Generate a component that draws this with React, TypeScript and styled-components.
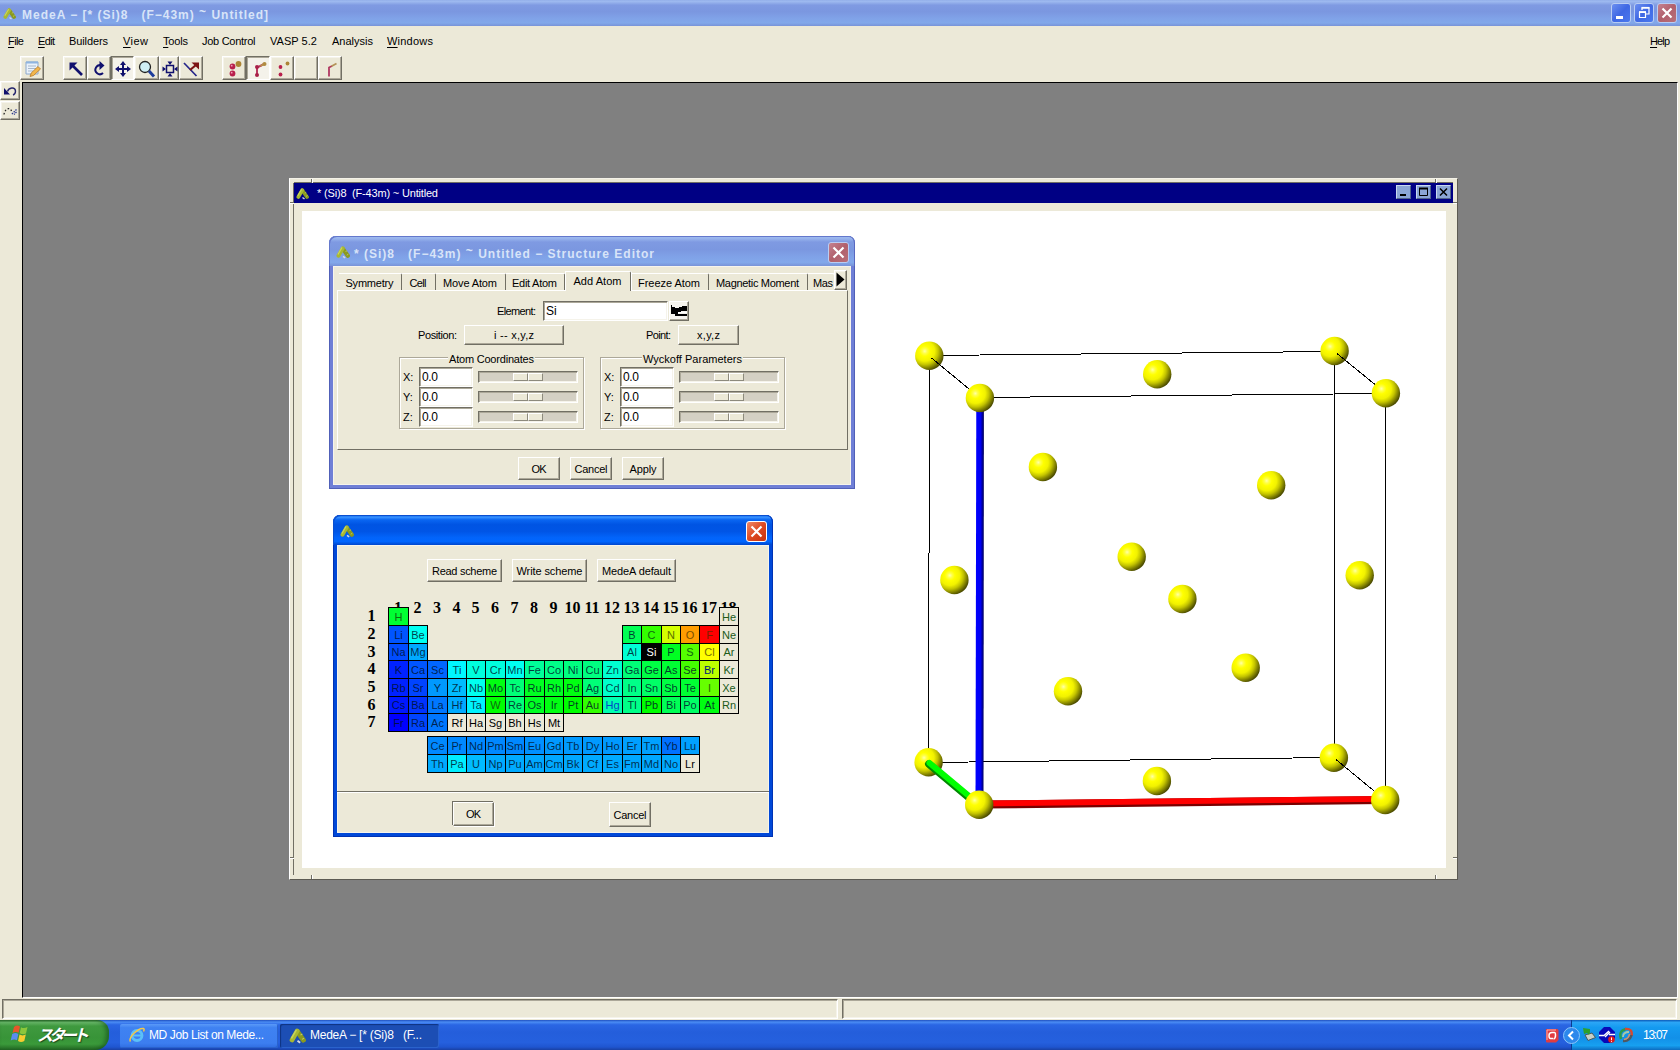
import React, { useLayoutEffect, useRef } from "react";
import styled, { createGlobalStyle, css } from "styled-components";

const FACE = "#ece9d8";

const Global = createGlobalStyle`
  *, *::before, *::after { box-sizing: border-box; }
  html, body { margin: 0; padding: 0; }
  body {
    font-family: "Liberation Sans", Arial, sans-serif;
    font-size: 11px;
    line-height: 14px;
    color: #000;
    overflow: hidden;
  }
`;

const raised = css`
  border: 1px solid;
  border-color: #fff #716f64 #716f64 #fff;
  box-shadow: inset -1px -1px 0 #aca899, inset 1px 1px 0 #f5f3ea;
`;
const sunken = css`
  border: 1px solid;
  border-color: #716f64 #fff #fff #716f64;
  box-shadow: inset 1px 1px 0 #aca899, inset -1px -1px 0 #f5f3ea;
`;

/* ---------- text fitted to the bitmap-font advance ---------- */
const FitSpan = styled.span`
  display: inline-block;
  white-space: pre;
  flex: none;
`;
function Fit({ w, children }: { w: number; children: React.ReactNode }) {
  const ref = useRef<HTMLSpanElement>(null);
  useLayoutEffect(() => {
    const el = ref.current!;
    el.style.letterSpacing = "0px";
    const natural = el.getBoundingClientRect().width;
    const n = (el.textContent || "").length;
    const ls = (w - natural) / Math.max(1, n - 1);
    el.style.letterSpacing = ls + "px";
    el.style.marginRight = -ls + "px";
  }, [w]);
  return <FitSpan ref={ref}>{children}</FitSpan>;
}

/* ---------- shell ---------- */
const Screen = styled.div`
  width: 1680px;
  height: 1050px;
  display: flex;
  flex-direction: column;
  background: ${FACE};
  overflow: hidden;
`;
const inactiveTitle = "linear-gradient(#94b0ea 0, #9db9ef 6%, #7f9ae2 20%, #7b97e0 45%, #80a2e8 70%, #82a8ea 88%, #7893d8 100%)";
const activeTitle = "linear-gradient(#0058e6 0, #3a93ff 7%, #0a66f2 16%, #0054e3 32%, #0055e6 55%, #0264fa 75%, #0066ff 88%, #0046cc 100%)";

const MainTitle = styled.header`
  height: 26px;
  flex: none;
  display: flex;
  align-items: center;
  padding: 0 3px 0 3px;
  gap: 6px;
  background: ${inactiveTitle};
`;
const TitleText = styled.div`
  flex: 1;
  font-weight: bold;
  font-size: 12px;
  color: #d8e4f8;
`;
const Tilde = styled.span`
  vertical-align: 3px;
`;
const CaptionButtons = styled.div`
  display: flex;
  gap: 3px;
`;
const Caption = styled.span<{ $tone: "blue" | "rose" | "red"; $size?: number }>`
  width: ${(p) => p.$size || 20}px;
  height: ${(p) => p.$size || 20}px;
  border: 1px solid ${(p) => (p.$tone === "red" ? "#fff" : "#b9cdf3")};
  border-radius: 3px;
  display: flex;
  background: ${(p) =>
    p.$tone === "blue"
      ? "linear-gradient(135deg,#6c8ff0,#3f68e4 50%,#4a78ee)"
      : p.$tone === "rose"
        ? "linear-gradient(135deg,#c58290,#b1606c 50%,#b8707a)"
        : "linear-gradient(135deg,#f08a68,#dd4a22 50%,#c8320e)"};
  svg { display: block; width: 100%; height: 100%; }
`;

const MenuBar = styled.nav`
  height: 30px;
  flex: none;
  display: flex;
  align-items: center;
  padding: 0 10px 0 8px;
`;
const MenuItem = styled.span<{ $slot: number }>`
  width: ${(p) => p.$slot}px;
  height: 14px;
  u { text-underline-offset: 2px; }
`;
const Grow = styled.div`
  flex: 1;
`;
const ToolBar = styled.div`
  height: 25px;
  flex: none;
  display: flex;
  align-items: flex-start;
  padding-left: 20px;
`;
const Tool = styled.span<{ $w?: number; $down?: boolean; $gap?: number }>`
  width: ${(p) => p.$w || 24}px;
  height: 24px;
  margin-left: ${(p) => p.$gap || 0}px;
  ${(p) => (p.$down ? sunken : raised)}
  ${(p) => p.$down && "background:#f4f2ea;"}
  display: flex;
  align-items: center;
  justify-content: center;
  padding: 1px 0 0 1px;
  svg { display: block; flex: none; overflow: visible; }
`;
const Workspace = styled.div`
  flex: 1;
  min-height: 0;
  display: flex;
`;
const SideBar = styled.aside`
  width: 22px;
  flex: none;
`;
const SideTool = styled.span`
  width: 20px;
  height: 19px;
  margin-bottom: 1px;
  ${raised}
  display: flex;
  align-items: center;
  justify-content: center;
`;
const Mdi = styled.main`
  width: 1656px;
  height: 916px;
  margin-top: 1px;
  position: relative;
  background: #808080;
  border-top: 1px solid #000;
  border-left: 1px solid #000;
  border-bottom: 1px solid #fff;
  border-right: 1px solid #fff;
`;
const StatusBar = styled.div`
  height: 21px;
  flex: none;
  display: flex;
  gap: 4px;
  padding: 0 2px 1px 2px;
`;
const StatusCell = styled.div<{ $w: number }>`
  width: ${(p) => p.$w}px;
  ${sunken}
`;

/* ---------- child window ---------- */
const ChildWindow = styled.section`
  position: absolute;
  left: 266px;
  top: 95px;
  width: 1169px;
  height: 702px;
  background: ${FACE};
  border: 1px solid;
  border-color: #f4f2e8 #5c5a52 #5c5a52 #fff;
  padding: 4px;
  display: flex;
  flex-direction: column;
`;
const FrameNotch = styled.i<{ $x: number; $y: number; $v?: boolean }>`
  position: absolute;
  left: ${(p) => p.$x}px;
  top: ${(p) => p.$y}px;
  width: ${(p) => (p.$v ? 2 : 4)}px;
  height: ${(p) => (p.$v ? 4 : 2)}px;
  background: linear-gradient(${(p) => (p.$v ? "to right" : "to bottom")}, #716f64 50%, #fff 50%);
`;
const ChildTitle = styled.div`
  height: 20px;
  flex: none;
  background: #000084;
  color: #fff;
  display: flex;
  align-items: center;
  gap: 8px;
  padding: 0 2px 0 2px;
  box-shadow: 0 -1px 0 #716f64, -1px 0 0 #716f64;
`;
const ChildButtons = styled.div`
  display: flex;
  gap: 5px;
  height: 14px;
  margin-top: -3px;
`;
const ChildButton = styled.span`
  width: 15px;
  height: 14px;
  background: #8ba6d6;
  border: 1px solid;
  border-color: #c8d8f0 #50648c #50648c #c8d8f0;
  svg { display: block; }
`;
const ChildBody = styled.div`
  flex: 1;
  padding: 8px 6px 7px 8px;
  box-shadow: -1px 0 0 #716f64;
`;
const Viewer = styled.div`
  width: 1144px;
  height: 657px;
  background: #fff;
  overflow: hidden;
  svg { display: block; }
`;

/* ---------- dialogs ---------- */
const Dialog = styled.section<{ $x: number; $y: number; $w: number; $h: number; $active?: boolean }>`
  position: absolute;
  left: ${(p) => p.$x}px;
  top: ${(p) => p.$y}px;
  width: ${(p) => p.$w}px;
  height: ${(p) => p.$h}px;
  border-radius: 7px 7px 0 0;
  background: ${(p) => (p.$active ? "#0048d8" : "#6f7fd6")};
  box-shadow: inset 0 0 0 1px ${(p) => (p.$active ? "#0032b4" : "#5060b8")};
  padding: 0 4px 4px 4px;
  display: flex;
  flex-direction: column;
`;
const DialogTitle = styled.div<{ $active?: boolean }>`
  height: 30px;
  flex: none;
  margin: 0 -4px;
  border-radius: 7px 7px 0 0;
  padding: 2px 6px 0 7px;
  display: flex;
  align-items: center;
  gap: 4px;
  background: ${(p) => (p.$active ? activeTitle : inactiveTitle)};
  box-shadow: inset 1px 1px 0 ${(p) => (p.$active ? "#0a4fd0" : "#6478cc")}, inset -1px 0 0 ${(p) => (p.$active ? "#0032b4" : "#5868c0")};
`;
const DialogBody = styled.div`
  flex: 1;
  min-height: 0;
  background: ${FACE};
  box-shadow: inset 0 0 0 1px #f6f4ec;
`;

const PushButton = styled.span<{ $w: number; $h?: number; $ml?: number; $default?: boolean }>`
  width: ${(p) => p.$w}px;
  height: ${(p) => p.$h || 23}px;
  margin-left: ${(p) => p.$ml || 0}px;
  flex: none;
  display: inline-flex;
  align-items: center;
  justify-content: center;
  background: ${FACE};
  border: 1px solid;
  border-color: #fff #716f64 #716f64 #fff;
  box-shadow: inset -1px -1px 0 #aca899${(p) => (p.$default ? ", -1px -1px 0 #716f64, 1px 1px 0 #fff" : "")};
`;

/* structure editor */
const TabStrip = styled.div`
  height: 24px;
  padding: 5px 0 0 6px;
  display: flex;
  align-items: flex-end;
`;
const Tab = styled.span<{ $w: number; $on?: boolean; $cut?: boolean }>`
  width: ${(p) => p.$w}px;
  height: ${(p) => (p.$on ? 20 : 17)}px;
  margin-bottom: ${(p) => (p.$on ? -1 : 0)}px;
  position: relative;
  z-index: ${(p) => (p.$on ? 1 : 0)};
  background: ${FACE};
  display: flex;
  align-items: flex-start;
  justify-content: ${(p) => (p.$cut ? "flex-start" : "center")};
  padding-top: 2px;
  padding-left: ${(p) => (p.$cut ? 5 : 0)}px;
  padding-right: ${(p) => (p.$cut ? 0 : 1)}px;
  overflow: hidden;
  border-top: 1px solid #fff;
  border-left: ${(p) => (p.$on ? "1px solid #fff" : "0")};
  border-right: ${(p) => (p.$cut ? "0" : "1px solid #716f64")};
  border-top-right-radius: 2px;
  box-shadow: 1px 0 0 #fff;
`;
const TabArrow = styled.span`
  width: 13px;
  height: 20px;
  ${raised}
  position: relative;
  svg { display: block; }
`;
const TabPanel = styled.div`
  width: 511px;
  height: 160px;
  margin-left: 4px;
  border: 1px solid;
  border-color: #fff #716f64 #716f64 #fff;
`;
const FieldRow = styled.div<{ $mt: number; $pl: number }>`
  display: flex;
  align-items: center;
  margin-top: ${(p) => p.$mt}px;
  padding-left: ${(p) => p.$pl}px;
`;
const TextInput = styled.span<{ $w: number; $h?: number; $ml?: number }>`
  width: ${(p) => p.$w}px;
  height: ${(p) => p.$h || 20}px;
  margin-left: ${(p) => p.$ml || 0}px;
  background: #fff;
  padding: 2px 2px 0;
  font-size: 12px;
  flex: none;
  ${sunken}
`;
const PickButton = styled.span`
  width: 20px;
  height: 20px;
  margin-left: 1px;
  ${raised}
  background: #f6f4ee;
  svg { display: block; }
`;
const Groups = styled.div`
  display: flex;
  gap: 16px;
  padding: 12px 0 0 61px;
`;
const Group = styled.div`
  width: 185px;
  height: 72px;
  border: 1px solid #aca899;
  box-shadow: 1px 1px 0 #fff, inset 1px 1px 0 #fff;
  padding-left: 3px;
`;
const Legend = styled.div`
  height: 10px;
  display: flex;
  justify-content: center;
  margin-top: -1px;
  padding-right: 3px;
`;
const LegendText = styled.span`
  height: 14px;
  margin-top: -5px;
  background: ${FACE};
  padding: 0 1px;
`;
const CoordRow = styled.div`
  height: 20px;
  display: flex;
  align-items: center;
`;
const AxisName = styled.span`
  width: 16px;
`;
const Slider = styled.span`
  width: 100px;
  height: 12px;
  margin-left: 5px;
  background: #d4d0c4;
  ${sunken}
  display: flex;
  justify-content: center;
  padding: 1px 0 0 0;
`;
const Thumb = styled.span`
  width: 30px;
  height: 8px;
  display: flex;
  &::before, &::after {
    content: "";
    flex: 1;
    background: ${FACE};
    border: 1px solid;
    border-color: #fff #8d8a7d #8d8a7d #fff;
  }
`;
const ButtonRow = styled.div<{ $pt: number; $pl: number }>`
  display: flex;
  padding: ${(p) => p.$pt}px 0 0 ${(p) => p.$pl}px;
`;

/* periodic table */
const Cols = "20px 19px 20px 19px 19px 20px 19px 20px 19px 19px 20px 20px 19px 20px 19px 19px 20px 19px";
const TableArea = styled.div`
  display: grid;
  grid-template-columns: 34px ${Cols};
  grid-template-rows: 14px 18px 18px 17px 18px 18px 17px 18px 5px 18px 18px;
  padding: 11px 0 0 17px;
`;
const Num = styled.span<{ $c: number; $r: number; $top?: boolean }>`
  grid-column: ${(p) => p.$c};
  grid-row: ${(p) => p.$r};
  font: bold 16px/18px "Liberation Serif", "Times New Roman", serif;
  display: flex;
  justify-content: center;
  margin-top: ${(p) => (p.$top ? 6 : 0)}px;
  margin-left: ${(p) => (p.$top ? 0 : 1)}px;
  height: 18px;
  white-space: nowrap;
`;
const Cell = styled.span<{ $c: number; $r: number; $bg: string; $fg: string }>`
  grid-column: ${(p) => p.$c};
  grid-row: ${(p) => p.$r};
  position: relative;
  margin: 0 -1px -1px 0;
  border: 1px solid #000;
  background: ${(p) => p.$bg};
  color: ${(p) => p.$fg};
  display: flex;
  align-items: center;
  justify-content: center;
  line-height: 16px;
`;
const Rule = styled.div<{ $mt: number }>`
  height: 2px;
  margin-top: ${(p) => p.$mt}px;
  border-top: 1px solid #716f64;
  border-bottom: 1px solid #fff;
`;

/* ---------- taskbar ---------- */
const TaskBar = styled.footer`
  height: 30px;
  flex: none;
  display: flex;
  background: linear-gradient(#1f50c0 0, #4a8cf4 7%, #2a66e4 16%, #245edb 40%, #2560de 75%, #1f55d0 90%, #1941a5 100%);
`;
const Start = styled.div`
  width: 109px;
  display: flex;
  align-items: center;
  padding: 0 0 2px 10px;
  gap: 8px;
  border-radius: 0 12px 14px 0;
  background: linear-gradient(#2a6e2a 0, #68b868 8%, #3f9a3f 20%, #389438 60%, #3a9a3a 80%, #256c25 100%);
  box-shadow: inset -3px 0 4px rgba(10, 60, 20, 0.5);
  color: #fff;
`;
const StartLabel = styled.span`
  font: italic bold 16px/20px "Noto Sans CJK JP", sans-serif;
  text-shadow: 1px 1px 1px #1c4a1c;
`;
const TaskButton = styled.div<{ $w: number; $ml: number; $on?: boolean }>`
  width: ${(p) => p.$w}px;
  height: 24px;
  margin: 4px 0 0 ${(p) => p.$ml}px;
  border-radius: 2px;
  display: flex;
  align-items: center;
  gap: 4px;
  padding-left: 9px;
  padding-bottom: 2px;
  color: #fff;
  font-size: 12px;
  background: ${(p) => (p.$on ? "#1c4eb4" : "linear-gradient(#5a9af8 0, #3f82f2 15%, #3c7ef0 80%, #2f6ce0 100%)")};
  box-shadow: ${(p) => (p.$on ? "inset 1px 1px 1px #0f3480, inset -1px -1px 0 #2a62cc" : "inset -1px -1px 0 #2a62cc")};
  svg { flex: none; }
`;
const TrayIdle = styled.div`
  padding: 7px 12px 0 0;
`;
const Tray = styled.div`
  width: 108px;
  display: flex;
  align-items: center;
  background: linear-gradient(#0c59b9 0, #2ba6f6 8%, #149af0 25%, #1290e8 60%, #17a0f0 85%, #0d6cc0 100%);
  box-shadow: -1px 0 0 #0a3c90;
  color: #fff;
  font-size: 12px;
  svg { flex: none; display: block; }
`;
const Chevron = styled.span`
  width: 17px;
  height: 17px;
  margin-left: -9px;
`;
const TrayIcons = styled.span`
  display: flex;
  gap: 3px;
  margin: 0 9px 0 2px;
`;

/* ---------- drawings ---------- */
const Logo = ({ size = 13 }: { size?: number }) => (
  <svg width={size} height={size} viewBox="0 0 13 13">
    <path d="M6.800 4 11 10" stroke="#8a9a20" strokeWidth="3.800" strokeLinecap="round" />
    <path d="M8.800 6.200 10.200 5.400M10 9.500 11.500 8.500" stroke="#c2cc60" strokeWidth=".8" />
    <path d="M6.300 3 2.300 10" stroke="#a8b832" strokeWidth="3.600" strokeLinecap="round" />
    <path d="M5.600 2.200 1.800 8.800" stroke="#c8d45c" strokeWidth="1.200" />
    <path d="M6.500 10.500 8.500 12" stroke="#d8dce0" strokeWidth="1.400" />
  </svg>
);
const CrossMark = ({ s = 18 }: { s?: number }) => (
  <svg viewBox={`0 0 ${s} ${s}`}>
    <path d={`M4.500 4.500 ${s - 4.5} ${s - 4.5}M${s - 4.5} 4.500 4.500 ${s - 4.5}`} stroke="#fff" strokeWidth="2.200" />
  </svg>
);
const NAVY = "#10106e";

const atoms: [number, number][] = [
  [929.3, 355.7], [1334.6, 351], [1157.2, 374.3], [1042.9, 467], [1271.2, 485.3],
  [1131.7, 556.7], [1182.4, 599], [954.4, 580], [1359.7, 575.3], [1245.7, 667.7],
  [1068, 691.3], [928.6, 762.3], [1333.9, 757.7], [1156.9, 781],
];
const frontAtoms: [number, number][] = [[979.9, 398], [1385.9, 393.3], [979.2, 804.7], [1385.2, 800]];

const Atom = ({ p }: { p: [number, number] }) => <circle cx={p[0]} cy={p[1]} r={14.2} fill="url(#atom)" />;

const Structure = () => (
  <svg width="1145" height="657" viewBox="302 211 1145 657">
    <defs>
      <radialGradient id="atom" cx="0.34" cy="0.34" r="0.7">
        <stop offset="0" stopColor="#ffffa8" />
        <stop offset="0.12" stopColor="#ffff48" />
        <stop offset="0.26" stopColor="#ffff00" />
        <stop offset="0.5" stopColor="#f2f200" />
        <stop offset="0.68" stopColor="#c4c400" />
        <stop offset="0.86" stopColor="#808000" />
        <stop offset="1" stopColor="#4c4c00" />
      </radialGradient>
      <linearGradient id="zAxis" x1="0" x2="1" y1="0" y2="0">
        <stop offset="0" stopColor="#0000ff" />
        <stop offset="0.6" stopColor="#0000f4" />
        <stop offset="1" stopColor="#000050" />
      </linearGradient>
    </defs>
    <g stroke="#000" strokeWidth="1" fill="none" shapeRendering="crispEdges">
      <path d="M929.500 355.500 1334.500 351.500M928.500 762.500 1333.500 757.500M929.500 355.500 928.500 762.500M1334.500 351 1334.500 757" />
      <path d="M980 397.500 1385.500 393.500M1385.500 393 1385.500 800" />
    </g>
    {atoms.map((p, i) => <Atom key={i} p={p} />)}
    <g stroke="#000" strokeWidth="1" shapeRendering="crispEdges">
      <path d="M931.500 358 980 398M1337 353.500 1386 393.500M1336 759.500 1385 800" />
    </g>
    <path d="M928.500 764 981 808" stroke="#008a00" strokeWidth="7" strokeLinecap="round" />
    <path d="M929.500 763 981 806" stroke="#00ff00" strokeWidth="6" strokeLinecap="round" />
    <path d="M976.300 398h7.600l-.4 407h-8z" fill="url(#zAxis)" />
    <path d="M979 800.600 1385 796v8L979 808.600z" fill="#7a0000" />
    <path d="M979 800.600 1385 796v5.800L979 806.400z" fill="#ff0000" />
    {frontAtoms.map((p, i) => <Atom key={i} p={p} />)}
  </svg>
);

/* ---------- data ---------- */
const menus: [string, string, number, number][] = [
  ["File", "F", 30, 16], ["Edit", "E", 31, 17], ["Builders", "", 54, 39], ["View", "V", 40, 25],
  ["Tools", "T", 39, 25], ["Job Control", "", 68, 53.5], ["VASP 5.2", "", 62, 47],
  ["Analysis", "", 55, 41], ["Windows", "W", 60, 46],
];

type El = [string, number, number, string, string?];
const line = (row: number, col: number, src: string): El[] =>
  src.split(" ").map((t, i) => {
    const [s, bg, fg] = t.split(":");
    return [s, row, col + i, bg === "-" ? FACE : "#" + bg, fg ? "#" + fg : undefined];
  });
const elements: El[] = [
  ...line(1, 1, "H:00ff33:106a10"), ...line(1, 18, "He:-:205a18"),
  ...line(2, 1, "Li:0055ff Be:00fff2"), ...line(2, 13, "B:00ff55 C:33ff00:106a10 N:d4ff00:5a7000 O:ff9d00:7a5000 F:ff0000:7a2000 Ne:-:205a18"),
  ...line(3, 1, "Na:004cff Mg:00aaff"), ...line(3, 13, "Al:00ffd5 Si:000000:ffffff P:00ff22 S:55ff00:106a10 Cl:ffff00:7a7000 Ar:-:205a18"),
  ...line(4, 1, "K:0022ff Ca:0055ff Sc:0066ff Ti:00f7ff V:00ffdd Cr:00ffdd Mn:00fff2 Fe:00ff99 Co:00ff88 Ni:00ff80 Cu:00ff80 Zn:00ffd0 Ga:00ff77 Ge:00ff44 As:00ff33 Se:44ff00 Br:bbff00:00207a Kr:-:205a18"),
  ...line(5, 1, "Rb:0022ff Sr:0044ff Y:0099ff Zr:00bbff Nb:00fff0 Mo:00ff11 Tc:00ff77 Ru:00ff22 Rh:00ff22 Pd:00ff11 Ag:00ff77 Cd:00ffcc In:00ff88 Sn:00ff66 Sb:00ff44 Te:00ff33 I:66ff00:306a00 Xe:-:205a18"),
  ...line(6, 1, "Cs:0018ff Ba:0033ff La:0077ff Hf:00aaff Ta:00f2ff W:00ff00:106a10 Re:00ff77 Os:00ff22 Ir:00ff11 Pt:00ff00 Au:33ff00 Hg:00ffb0:0048c8 Tl:00ff88 Pb:00ff00 Bi:00ff55 Po:00ff66 At:00ff11 Rn:-:205a18"),
  ...line(7, 1, "Fr:0000ff Ra:0044ff Ac:0077ff Rf:-:000000 Ha:-:000000 Sg:-:000000 Bh:-:000000 Hs:-:000000 Mt:-:000000"),
  ...line(9, 3, "Ce:0088ff Pr:0088ff Nd:0088ff Pm:0088ff Sm:0088ff Eu:0090ff Gd:0099ff Tb:0099ff Dy:0099ff Ho:0099ff Er:00a0ff Tm:00a0ff Yb:0070ff Lu:00a0ff"),
  ...line(10, 3, "Th:00aaff Pa:00eeff U:00bbff Np:00aaff Pu:00aaff Am:00a8ff Cm:00a8ff Bk:00a8ff Cf:00aaff Es:00aaff Fm:00a8ff Md:00a8ff No:00a8ff Lr:-:000000"),
];

function CoordGroup({ title, w }: { title: string; w: number }) {
  return (
    <Group>
      <Legend><LegendText><Fit w={w}>{title}</Fit></LegendText></Legend>
      {["X:", "Y:", "Z:"].map((a) => (
        <CoordRow key={a}>
          <AxisName>{a}</AxisName>
          <TextInput $w={54}><Fit w={16}>0.0</Fit></TextInput>
          <Slider><Thumb /></Slider>
        </CoordRow>
      ))}
    </Group>
  );
}

function StructureEditor() {
  return (
    <Dialog $x={39} $y={57} $w={526} $h={253}>
      <DialogTitle>
        <Logo size={14} />
        <TitleText><Fit w={300}>* (Si)8   (F−43m) <Tilde>~</Tilde> Untitled − Structure Editor</Fit></TitleText>
        <Caption $tone="rose" $size={21}><CrossMark s={19} /></Caption>
      </DialogTitle>
      <DialogBody>
        <TabStrip>
          <Tab $w={63}><Fit w={48}>Symmetry</Fit></Tab>
          <Tab $w={34}><Fit w={17}>Cell</Fit></Tab>
          <Tab $w={70}><Fit w={54}>Move Atom</Fit></Tab>
          <Tab $w={59}><Fit w={45}>Edit Atom</Fit></Tab>
          <Tab $w={66} $on><Fit w={48}>Add Atom</Fit></Tab>
          <Tab $w={78}><Fit w={62}>Freeze Atom</Fit></Tab>
          <Tab $w={99}><Fit w={83}>Magnetic Moment</Fit></Tab>
          <Tab $w={26} $cut><Fit w={20}>Mas</Fit></Tab>
          <TabArrow><svg width="11" height="18"><path d="M1.500 1.500 9.500 8.500 1.500 15.500z" fill="#000" /></svg></TabArrow>
        </TabStrip>
        <TabPanel>
          <FieldRow $mt={10} $pl={159}>
            <Fit w={39}>Element:</Fit>
            <TextInput $w={125} $ml={7}>Si</TextInput>
            <PickButton>
              <svg width="18" height="18">
                <path d="M1 3h1v2h3v1h4v-1h3v-1h5v5h-6v1h-3v2h-7z" fill="#000" />
                <path d="M5 12h12v2h-12z" fill="#000" />
                <path d="M8 10.500h9" stroke="#fff" />
              </svg>
            </PickButton>
          </FieldRow>
          <FieldRow $mt={4} $pl={80}>
            <Fit w={39}>Position:</Fit>
            <PushButton $w={100} $h={20} $ml={7}><Fit w={40}>i -- x,y,z</Fit></PushButton>
            <FieldRow $mt={0} $pl={82}>
              <Fit w={25}>Point:</Fit>
              <PushButton $w={61} $h={20} $ml={7}><Fit w={23}>x,y,z</Fit></PushButton>
            </FieldRow>
          </FieldRow>
          <Groups>
            <CoordGroup title="Atom Coordinates" w={85} />
            <CoordGroup title="Wyckoff Parameters" w={99} />
          </Groups>
        </TabPanel>
        <ButtonRow $pt={7} $pl={185}>
          <PushButton $w={42}><Fit w={15}>OK</Fit></PushButton>
          <PushButton $w={42} $ml={10}><Fit w={33}>Cancel</Fit></PushButton>
          <PushButton $w={42} $ml={10}><Fit w={27}>Apply</Fit></PushButton>
        </ButtonRow>
      </DialogBody>
    </Dialog>
  );
}

function ElementPicker() {
  return (
    <Dialog $x={43} $y={336} $w={440} $h={322} $active>
      <DialogTitle $active>
        <Logo size={14} />
        <TitleText />
        <Caption $tone="red" $size={21}><CrossMark s={19} /></Caption>
      </DialogTitle>
      <DialogBody>
        <ButtonRow $pt={14} $pl={90}>
          <PushButton $w={75}><Fit w={65}>Read scheme</Fit></PushButton>
          <PushButton $w={75} $ml={10}><Fit w={66}>Write scheme</Fit></PushButton>
          <PushButton $w={79} $ml={10}><Fit w={69}>MedeA default</Fit></PushButton>
        </ButtonRow>
        <TableArea>
          {Array.from({ length: 18 }, (_, i) => <Num key={i} $c={i + 2} $r={1} $top>{i + 1}</Num>)}
          {Array.from({ length: 7 }, (_, i) => <Num key={i} $c={1} $r={i + 2}>{i + 1}</Num>)}
          {elements.map(([s, r, c, bg, fg]) => (
            <Cell key={s} $r={r + 1} $c={c + 1} $bg={bg} $fg={fg || "rgba(0,16,40,.82)"}>{s}</Cell>
          ))}
        </TableArea>
        <Rule $mt={19} />
        <ButtonRow $pt={9} $pl={116}>
          <PushButton $w={41} $h={24} $default><Fit w={15}>OK</Fit></PushButton>
          <PushButton $w={42} $h={25} $ml={115}><Fit w={33}>Cancel</Fit></PushButton>
        </ButtonRow>
      </DialogBody>
    </Dialog>
  );
}

export default function App() {
  return (
    <Screen>
      <Global />
      <MainTitle>
        <Logo />
        <TitleText><Fit w={246}>MedeA − [* (Si)8   (F−43m) <Tilde>~</Tilde> Untitled]</Fit></TitleText>
        <CaptionButtons>
          <Caption $tone="blue"><svg viewBox="0 0 18 18"><path d="M4 12h7v3H4z" fill="#fff" /></svg></Caption>
          <Caption $tone="blue">
            <svg viewBox="0 0 18 18" fill="none" stroke="#fff">
              <path d="M7 6V4h7v6h-3" strokeWidth="1.200" /><path d="M6.500 3.700h8" strokeWidth="1.600" />
              <path d="M4.500 8.500h6v5h-6z" strokeWidth="1.200" /><path d="M4 8h7" strokeWidth="1.800" />
            </svg>
          </Caption>
          <Caption $tone="rose"><CrossMark /></Caption>
        </CaptionButtons>
      </MainTitle>
      <MenuBar>
        {menus.map(([t, key, slot, w]) => (
          <MenuItem key={t} $slot={slot}><Fit w={w}>{key ? <><u>{key}</u>{t.slice(1)}</> : t}</Fit></MenuItem>
        ))}
        <Grow />
        <MenuItem $slot={20}><Fit w={20}><u>H</u>elp</Fit></MenuItem>
      </MenuBar>
      <ToolBar>
        <Tool>
          <svg width="18" height="18" viewBox="0 0 18 18">
            <path d="M2 2h12v12H2z" fill="#eaf2fb" stroke="#8ca8cc" />
            <path d="M2 2.500h12" stroke="#8fb4e0" strokeWidth="2" />
            <path d="M4 6h8M4 8.500h8M4 11h5" stroke="#a8b8cc" />
            <path d="M14 6.500 16.500 9 9.500 15.500 6 16.500 7.200 13z" fill="#f2b64c" stroke="#b5792a" strokeWidth=".8" />
          </svg>
        </Tool>
        <Tool $gap={19}>
          <svg width="16" height="16"><path d="M5 5 14 14" stroke={NAVY} strokeWidth="2.600" /><path d="M1.500 1.500h8l-8 8z" fill={NAVY} /></svg>
        </Tool>
        <Tool>
          <svg width="16" height="16"><path d="M9.500 4.500A4.500 4.500 0 1 0 11 12" fill="none" stroke={NAVY} strokeWidth="2" /><path d="M7.500 0 12.500 4.500 7.500 9z" fill={NAVY} /></svg>
        </Tool>
        <Tool $w={23} $down>
          <svg width="16" height="16"><path d="M8 2v12M2 8h12" stroke={NAVY} strokeWidth="2" /><path d="M8 0l3 4H5zM8 16l3-4H5zM0 8l4-3v6zM16 8l-4-3v6z" fill={NAVY} /></svg>
        </Tool>
        <Tool $w={25}>
          <svg width="18" height="18"><circle cx="7" cy="7" r="5.500" fill="#cfeef4" stroke="#222" strokeWidth="1.300" /><path d="M11 11 16 16.500" stroke="#1c3c9c" strokeWidth="3" /></svg>
        </Tool>
        <Tool $w={20}>
          <svg width="16" height="16"><path d="M4.500 4.500h7v7h-7z" fill="none" stroke={NAVY} strokeWidth="1.500" /><path d="M8 4 5.500 .5h5zM8 12l2.500 3.500h-5zM4 8 .5 5.500v5zM12 8l3.500-2.500v5z" fill={NAVY} /></svg>
        </Tool>
        <Tool>
          <svg width="16" height="16"><path d="M0 2 12.500 15" stroke="#26268a" strokeWidth="1.700" /><path d="M6 9 12 4" stroke="#7c1414" strokeWidth="2.200" /><path d="M7.500 1.500H15v7z" fill="#7c1414" /></svg>
        </Tool>
        <Tool $gap={19}>
          <svg width="16" height="16"><circle cx="5.500" cy="5.500" r="2.900" fill="#b8204c" /><circle cx="5.500" cy="12.500" r="2.900" fill="#b8204c" /><circle cx="11.500" cy="3" r="2.900" fill="#ac8434" /><circle cx="4.700" cy="4.700" r=".9" fill="#f0a0b8" /><circle cx="4.700" cy="11.700" r=".9" fill="#f0a0b8" /></svg>
        </Tool>
        <Tool $down>
          <svg width="16" height="16"><path d="M13 3 6 6.500v8" fill="none" stroke="#b83860" strokeWidth="2" /><path d="M14 2.500 9.500 5" stroke="#b8944c" strokeWidth="2" /><circle cx="6" cy="6" r="2" fill="#a82048" /><circle cx="6" cy="14" r="2" fill="#a82048" /><circle cx="13.500" cy="3" r="2" fill="#b08c40" /></svg>
        </Tool>
        <Tool>
          <svg width="16" height="16"><circle cx="5.500" cy="6" r="1.900" fill="#b8204c" /><circle cx="5.500" cy="13.500" r="1.900" fill="#b8204c" /><circle cx="12.500" cy="2.500" r="1.900" fill="#ac8434" /></svg>
        </Tool>
        <Tool />
        <Tool>
          <svg width="16" height="16"><path d="M6 15.500V6.500L9 5" fill="none" stroke="#b03860" strokeWidth="1.800" /><path d="M8.500 5.300 13.500 2.500" stroke="#b49258" strokeWidth="1.800" /></svg>
        </Tool>
      </ToolBar>
      <Workspace>
        <SideBar>
          <SideTool><svg width="14" height="12"><path d="M4.500 6.500C5.500 2.500 12 1.500 12.500 6c0 2-1 3.500-2.500 4" fill="none" stroke="#26266e" strokeWidth="1.400" /><path d="M1 3v6.500h6z" fill={NAVY} /></svg></SideTool>
          <SideTool><svg width="14" height="12"><path d="M1 9.500C2 3 7 2 8.500 6" fill="none" stroke="#222" strokeWidth="1.300" strokeDasharray="1.500 2" /><path d="M13.500 4.500 8.500 9.500M13.500 7 11 9.500" stroke="#303c90" strokeWidth="1.300" strokeDasharray="1.500 1" /></svg></SideTool>
        </SideBar>
        <Mdi>
          <ChildWindow>
            <ChildTitle>
              <Logo />
              <Fit w={121}>* (Si)8  (F-43m) ~ Untitled</Fit>
              <Grow />
              <ChildButtons>
                <ChildButton><svg width="13" height="12"><path d="M3 8h6v2H3z" /></svg></ChildButton>
                <ChildButton><svg width="13" height="12"><path d="M2.500 2.500h8v7h-8z" fill="none" stroke="#000" /><path d="M2 2.500h9" stroke="#000" strokeWidth="2" /></svg></ChildButton>
                <ChildButton><svg width="13" height="12"><path d="M3 2.500 10 9.500M10 2.500 3 9.500" stroke="#000" strokeWidth="1.500" /></svg></ChildButton>
              </ChildButtons>
            </ChildTitle>
            <ChildBody><Viewer><Structure /></Viewer></ChildBody>
            <FrameNotch $x={21} $y={0} $v /><FrameNotch $x={1145} $y={0} $v />
            <FrameNotch $x={21} $y={696} $v /><FrameNotch $x={1145} $y={696} $v />
            <FrameNotch $x={0} $y={23} /><FrameNotch $x={1163} $y={23} />
            <FrameNotch $x={0} $y={678} /><FrameNotch $x={1163} $y={678} />
            <StructureEditor />
            <ElementPicker />
          </ChildWindow>
        </Mdi>
      </Workspace>
      <StatusBar>
        <StatusCell $w={836} />
        <StatusCell $w={835} />
      </StatusBar>
      <TaskBar>
        <Start>
          <svg width="19" height="18" viewBox="0 0 19 18">
            <path d="M4 2Q7-.5 10 1.500L8.600 7.800Q5.500 6 2.500 8z" fill="#e8562a" />
            <path d="M11 2.200Q14 4 17.500 2L16 8.500Q13 10 9.700 8.200z" fill="#8cc63c" />
            <path d="M2.200 9Q5.500 7 8.300 9L7 15.300Q4 13.500.7 15.500z" fill="#5a8cf0" />
            <path d="M9.500 9.600Q12.500 11.200 15.800 9.600L14.300 16Q11 17.800 8 16z" fill="#f8cc30" />
          </svg>
          <StartLabel><Fit w={52}>スタート</Fit></StartLabel>
        </Start>
        <TaskButton $w={158} $ml={11}>
          <svg width="16" height="16" viewBox="0 0 16 16">
            <circle cx="8" cy="8.500" r="5" fill="none" stroke="#5cc0f8" strokeWidth="2.800" />
            <path d="M3.500 8.500h9.500" stroke="#5cc0f8" strokeWidth="2" />
            <path d="M1.500 14.500C-1 11 9 .5 14.500 1.500c1 .5.500 2 0 3" fill="none" stroke="#f4c848" strokeWidth="1.500" />
          </svg>
          <Fit w={115}>MD Job List on Mede...</Fit>
        </TaskButton>
        <TaskButton $w={159} $ml={2} $on>
          <Logo size={17} />
          <Fit w={112}>MedeA − [* (Si)8   (F...</Fit>
        </TaskButton>
        <Grow />
        <TrayIdle>
          <svg width="16" height="17" viewBox="0 0 16 17">
            <path d="M2 2h11q1.500 0 1.500 1.500V13L12 15.500H3Q2 15.500 2 14z" fill="#e23c40" />
            <path d="M9 11.500H6.500Q5 11.500 5 8.500T8 5.500h2.500q1 0 1 3t-2 3.500" fill="none" stroke="#fff" strokeWidth="1.500" />
            <path d="M3 3v10M3 3h9" stroke="#f8b0b0" />
          </svg>
        </TrayIdle>
        <Tray>
          <Chevron>
            <svg width="17" height="17"><circle cx="8.500" cy="8.500" r="8" fill="#2c88ec" stroke="#8cc4fa" /><path d="M10 4.500 6 8.500 10 12.500" fill="none" stroke="#fff" strokeWidth="2" /></svg>
          </Chevron>
          <TrayIcons>
            <svg width="14" height="15"><path d="M3 8 10 6l3.500 4.500L6 13.500z" fill="#c8d0c8" stroke="#48585c" /><path d="M1 1 8 2v3l-1 3-2-2-3 1z" fill="#2ca02c" /></svg>
            <svg width="16" height="16"><path d="M5 0h6l5 5v6l-5 5H5l-5-5V5z" fill="#0808b8" /><path d="M0 8.500h5L10 4M6 10l5-5M10 7.500h6" stroke="#fff" strokeWidth="1.300" fill="none" /><circle cx="12.500" cy="12.500" r="3.300" fill="#e01818" /><path d="M12.500 10.500v2.500M12.500 13.800v1" stroke="#fff" /></svg>
            <svg width="16" height="16" fill="none" strokeWidth="2.400"><path d="M3 12Q0 4 8 2" stroke="#2c9c4c" /><path d="M7 2Q15 1 13.500 9" stroke="#d84830" /><path d="M13.500 8Q12 14.500 5 14" stroke="#505860" /><path d="M5 10Q5 5 11 5" stroke="#a8c8a8" strokeWidth="1.800" /><path d="M6 12.500Q11 11.500 11.500 7" stroke="#e09060" strokeWidth="1.600" /></svg>
          </TrayIcons>
          <Fit w={25}>13:07</Fit>
        </Tray>
      </TaskBar>
    </Screen>
  );
}
